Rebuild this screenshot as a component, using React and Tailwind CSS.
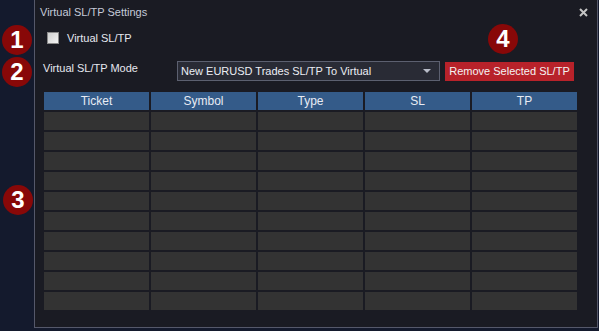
import { useState } from 'react';

const columns = ['Ticket', 'Symbol', 'Type', 'SL', 'TP'];
const rows = Array.from({ length: 10 });

const Badge = ({ n, className }) => (
  <div
    className={`absolute w-[30px] h-[30px] rounded-full bg-[#880808] text-white font-bold text-[24px] leading-none flex items-center justify-center ${className}`}
    style={{ fontFamily: '"Liberation Sans", Arial, sans-serif' }}
  >
    {n}
  </div>
);

const App = () => {
  const [enabled, setEnabled] = useState(false);

  return (
    <div
      className="relative w-[599px] h-[331px] bg-[#141a2d] overflow-hidden text-[11px]"
      style={{ fontFamily: '"Liberation Sans", Arial, sans-serif' }}
    >
      <div className="ml-[34px] w-[564px] h-[328px] flex flex-col bg-[#1a1b23] border-l border-r border-b border-[#55586a]">
        {/* Title bar */}
        <div className="h-[24px] flex items-center justify-between pl-[5px] pr-[8px]">
          <span className="text-[#c5cad8]">Virtual SL/TP Settings</span>
          <svg width="9" height="9" viewBox="0 0 9 9" className="mr-[1px]">
            <path d="M1 1l7 7M8 1L1 8" stroke="#c4c4c4" strokeWidth="2" />
          </svg>
        </div>

        {/* Checkbox */}
        <label className="mt-[8px] pl-[12px] h-[12px] flex items-center gap-[8px] cursor-pointer">
          <input
            type="checkbox"
            checked={enabled}
            onChange={(e) => setEnabled(e.target.checked)}
            className="appearance-none w-[12px] h-[12px] border border-[#8a8a8a] bg-gradient-to-br from-[#d0d0d0] to-[#f4f4f4]"
          />
          <span className="text-[#e6e8f0]">Virtual SL/TP</span>
        </label>

        {/* Mode row */}
        <div className="mt-[17px] pl-[8px] flex items-center">
          <span className="w-[134px] text-[#e6e8f0] -mt-[5px]">Virtual SL/TP Mode</span>
          <div className="w-[263px] h-[20px] flex items-center justify-between border border-[#5c6070] bg-[#292b35] pl-[3px] pr-[8px]">
            <span className="text-[#eceef4]">New EURUSD Trades SL/TP To Virtual</span>
            <svg width="8" height="4" viewBox="0 0 8 4">
              <path d="M0 0h8L4 4z" fill="#b8bcc8" />
            </svg>
          </div>
          <button className="ml-[5px] w-[129px] h-[19px] bg-[#b8222a] text-[#f4f4f4] flex items-center justify-center">
            Remove Selected SL/TP
          </button>
        </div>

        {/* Table */}
        <div className="mt-[11px] ml-[9px] w-[533px] grid grid-cols-5 gap-[2px]">
          {columns.map((c) => (
            <div key={c} className="h-[18px] bg-[#345b89] text-[#e8ecf4] text-[12px] flex items-center justify-center">
              {c}
            </div>
          ))}
          {rows.map((_, i) =>
            columns.map((c) => <div key={`${i}-${c}`} className="h-[18px] bg-[#333333]" />)
          )}
        </div>
      </div>

      <Badge n="1" className="left-[2px] top-[25px]" />
      <Badge n="2" className="left-[2px] top-[57px]" />
      <Badge n="3" className="left-[3px] top-[185px]" />
      <Badge n="4" className="left-[488px] top-[24px]" />
    </div>
  );
};

export default App;
